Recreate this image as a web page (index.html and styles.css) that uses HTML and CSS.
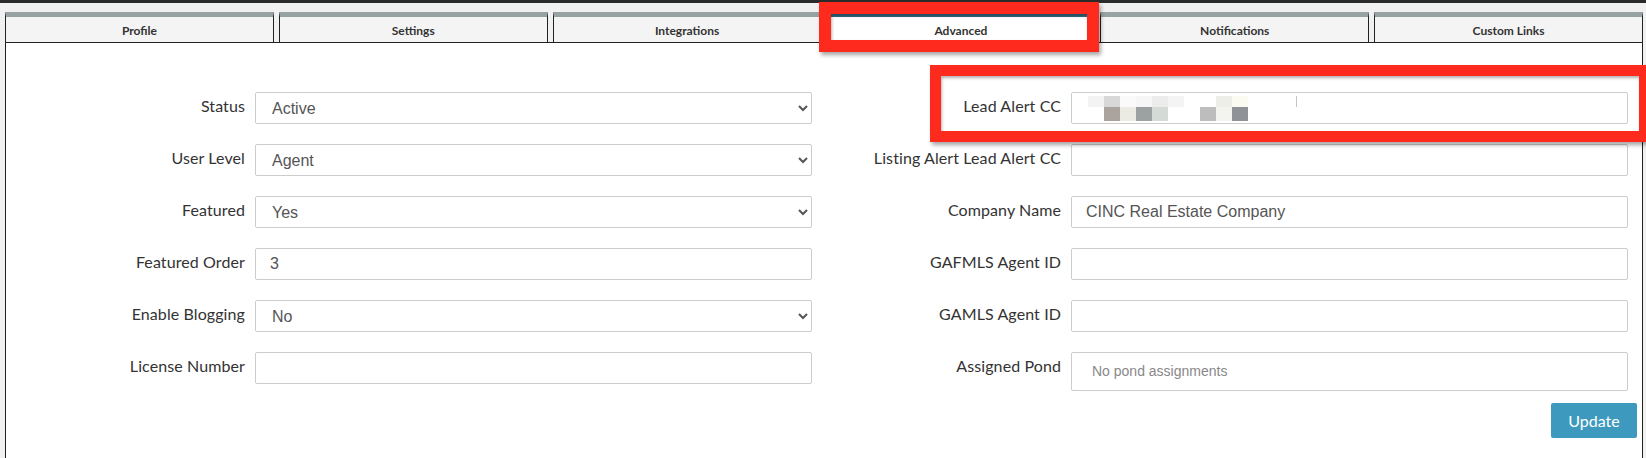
FILE: index.html
```html
<!DOCTYPE html>
<html lang="en">
<head>
  <meta charset="UTF-8">
  <title>Agent Settings - Advanced</title>
  <link rel="stylesheet" href="styles.css">
</head>
<body>

<!-- Dark strip at the very top -->
<div class="topbar"></div>

<div class="page">

  <!-- Tabs row -->
  <ul class="tabs">
    <li class="tab">Profile</li>
    <li class="tab">Settings</li>
    <li class="tab">Integrations</li>
    <li class="tab active">Advanced</li>
    <li class="tab">Notifications</li>
    <li class="tab">Custom Links</li>
  </ul>

  <!-- Tab content -->
  <div class="panel">
    <form class="form-grid">

      <label class="field-label">Status</label>
      <select class="field">
        <option>Active</option>
        <option>Inactive</option>
      </select>
      <label class="field-label">Lead Alert CC</label>
      <div class="field fake-field">
        <div class="mosaic">
          <span style="background:#f3f3f3"></span><span style="background:#d8d8d8"></span><span style="background:#fafafa"></span><span style="background:#f6f6f6"></span><span style="background:#ececec"></span><span style="background:#f4f4f4"></span><span></span><span></span><span style="background:#eeeee9"></span><span style="background:#fbfbf2"></span><span></span><span></span><span></span><span class="caret"></span>
          <span></span><span style="background:#aba39d"></span><span style="background:#ecebe3"></span><span style="background:#9ca1a1"></span><span style="background:#d4dad6"></span><span></span><span></span><span style="background:#bdbdbd"></span><span style="background:#f3f4f0"></span><span style="background:#8f9297"></span>
        </div>
      </div>

      <label class="field-label">User Level</label>
      <select class="field">
        <option>Agent</option>
        <option>Admin</option>
      </select>
      <label class="field-label">Listing Alert Lead Alert CC</label>
      <input type="text" class="field">

      <label class="field-label">Featured</label>
      <select class="field">
        <option>Yes</option>
        <option>No</option>
      </select>
      <label class="field-label">Company Name</label>
      <input type="text" class="field" value="CINC Real Estate Company">

      <label class="field-label">Featured Order</label>
      <input type="text" class="field" value="3">
      <label class="field-label">GAFMLS Agent ID</label>
      <input type="text" class="field">

      <label class="field-label">Enable Blogging</label>
      <select class="field">
        <option>No</option>
        <option>Yes</option>
      </select>
      <label class="field-label">GAMLS Agent ID</label>
      <input type="text" class="field">

      <label class="field-label">License Number</label>
      <input type="text" class="field">
      <label class="field-label">Assigned Pond</label>
      <div class="field pond">No pond assignments</div>

    </form>

    <div class="actions">
      <button type="button" class="btn-update">Update</button>
    </div>
  </div>
</div>

<!-- Red highlight boxes drawn over the screenshot -->
<div class="highlight hl-tab"></div>
<div class="highlight hl-lead"></div>

</body>
</html>
```

FILE: styles.css
```css
/* Page */
body {
  margin: 0;
  background: #f1f1f1;
  font-family: Lato, "Liberation Sans", sans-serif;
  color: #333;
  overflow: hidden;
}

.topbar {
  height: 3px;
  background: #2b2b2b;
}

.page {
  margin: 9px 3px 0 5px;
}

/* Tabs */
.tabs {
  list-style: none;
  margin: 0;
  padding: 0;
  display: flex;
  gap: 5px;
  border-bottom: 1px solid #222;
}

.tab {
  flex: 1;
  height: 25px;
  line-height: 27px;
  border-top: 5px solid #97a3a3;
  border-left: 1px solid #222;
  border-right: 1px solid #222;
  background: #f4f4f4;
  text-align: center;
  font-size: 12px;
  font-weight: bold;
  color: #333;
}

.tab.active {
  background: #fff;
  border-top-color: #2f6d84;
  height: 26px;
  margin-bottom: -1px;
}

/* Panel under the tabs */
.panel {
  background: #fff;
  border-left: 1px solid #222;
  border-right: 1px solid #222;
  height: calc(100vh - 43px);
  box-sizing: border-box;
  padding: 49px 14px 0 9px;
}

.form-grid {
  display: grid;
  grid-template-columns: 240px 557px 259px 557px;
  grid-auto-rows: auto;
  row-gap: 20px;
  align-items: start;
}

.field-label {
  text-align: right;
  padding-right: 10px;
  font-size: 16px;
  letter-spacing: 0.1px;
  line-height: 20px;
  padding-top: 4px;
  color: #333;
}

.field {
  box-sizing: border-box;
  height: 32px;
  margin: 0;
  border: 1px solid #cccccc;
  border-radius: 2px;
  background: #fff;
  padding: 0 14px;
  font-family: "Liberation Sans", Arial, sans-serif;
  font-size: 16px;
  color: #555;
}

select.field {
  padding-left: 12px;
}

/* Blurred email in the Lead Alert CC box */
.fake-field {
  padding: 3px 0 0 16px;
}

.mosaic {
  display: grid;
  grid-template-columns: repeat(14, 16px);
  grid-template-rows: 11px 14px;
}

.mosaic .caret {
  width: 1px;
  background: #c4c4c4;
}

.pond {
  height: 39px;
  padding: 10px 20px;
  font-size: 14px;
  color: #888;
}

/* Update button */
.actions {
  display: flex;
  justify-content: flex-end;
  margin: 12px -9px 0 0;
}

.btn-update {
  width: 86px;
  height: 35px;
  border: none;
  border-radius: 2px;
  background: #3d9abe;
  color: #fff;
  font-family: Lato, "Liberation Sans", sans-serif;
  font-size: 16px;
  cursor: pointer;
}

/* Red annotation boxes */
.highlight {
  position: absolute;
  box-sizing: border-box;
  border: 12px solid #fe2a1e;
  box-shadow: 2px 3px 4px rgba(0, 0, 0, 0.35), inset 1px 2px 3px rgba(0, 0, 0, 0.3);
}

.hl-tab {
  left: 819px;
  top: 2px;
  width: 280px;
  height: 50px;
}

.hl-lead {
  left: 930px;
  top: 65px;
  width: 720px;
  height: 77px;
  border-width: 11px;
}
```
